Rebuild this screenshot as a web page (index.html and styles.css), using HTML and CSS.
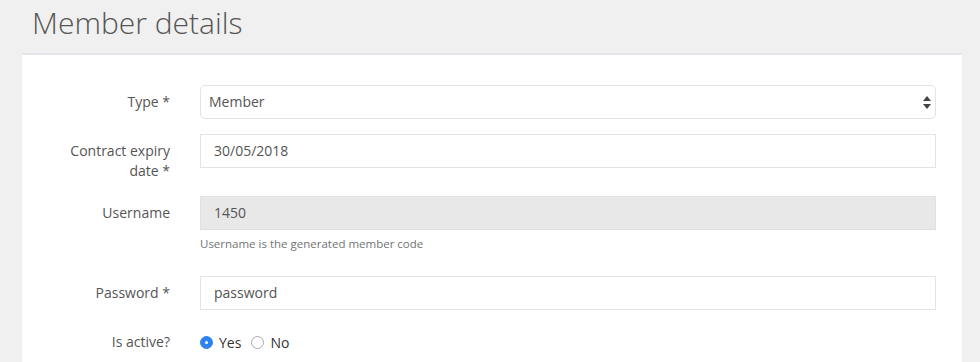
FILE: index.html
```html
<!DOCTYPE html>
<html>
<head>
<meta charset="utf-8">
<link rel="stylesheet" href="styles.css">
</head>
<body>
<h1 class="page-title">Member details</h1>
<div class="panel">
  <form class="form">
    <label class="label">Type *</label>
    <div class="field">
      <div class="select">
        <span>Member</span>
        <svg class="select-arrows" width="8" height="13" viewBox="0 0 8 13"><path d="M4 0 L8 5 L0 5 Z M0 8 L8 8 L4 13 Z" fill="#444"/></svg>
      </div>
    </div>

    <label class="label">Contract expiry date *</label>
    <div class="field">
      <div class="input">30/05/2018</div>
    </div>

    <label class="label">Username</label>
    <div class="field">
      <div class="input input-disabled">1450</div>
      <p class="help">Username is the generated member code</p>
    </div>

    <label class="label">Password *</label>
    <div class="field">
      <div class="input">password</div>
    </div>

    <label class="label">Is active?</label>
    <div class="field radios">
      <span class="radio radio-on"></span><span class="radio-text">Yes</span>
      <span class="radio"></span><span class="radio-text">No</span>
    </div>
  </form>
</div>
</body>
</html>
```
FILE: styles.css
```css
html, body {
  margin: 0;
  padding: 0;
  background: #f0f0f0;
  font-family: "Open Sans", "Liberation Sans", sans-serif;
  color: #555;
  overflow: hidden;
}
.page-title {
  margin: 0;
  padding: 3px 0 0 32px;
  height: 53px;
  box-sizing: border-box;
  font-size: 30px;
  font-weight: 300;
  line-height: 40px;
  color: #555;
}
.panel {
  margin: 0 18px 0 22px;
  background: #fff;
  border-top: 2px solid #e1e5e9;
  padding: 30px 26px 20px 20px;
  height: 400px;
}
.form {
  display: grid;
  grid-template-columns: 128px 1fr;
  column-gap: 30px;
  row-gap: 15px;
  font-size: 14px;
}
.label {
  text-align: right;
  padding-top: 7px;
  line-height: 20px;
  color: #555;
}
.field {
  min-width: 0;
}
.select, .input {
  height: 34px;
  box-sizing: border-box;
  border: 1px solid #e3e3e3;
  line-height: 32px;
  color: #555;
}
.select {
  position: relative;
  border-radius: 5px;
  padding-left: 8px;
}
.select-arrows {
  position: absolute;
  right: 4px;
  top: 10px;
}
.input {
  padding-left: 13px;
}
.input-disabled {
  background: #e8e8e8;
  border-color: #e1e1e1;
}
.help {
  margin: 5px 0 9px;
  font-size: 11.5px;
  line-height: 17px;
  color: #737373;
}
.radios {
  display: flex;
  align-items: center;
  height: 34px;
}
.radio {
  width: 13px;
  height: 13px;
  box-sizing: border-box;
  border: 1px solid #aaa;
  border-radius: 50%;
  background: #fff;
  margin-top: 1px;
}
.radio-on {
  background: #2d84ef;
  border-color: #2d84ef;
  position: relative;
}
.radio-on::after {
  content: "";
  position: absolute;
  left: 4px;
  top: 4px;
  width: 3px;
  height: 3px;
  border-radius: 50%;
  background: #fff;
}
.radio-text {
  margin-left: 6px;
  margin-right: 10px;
  color: #333;
  font-size: 14px;
}
```
